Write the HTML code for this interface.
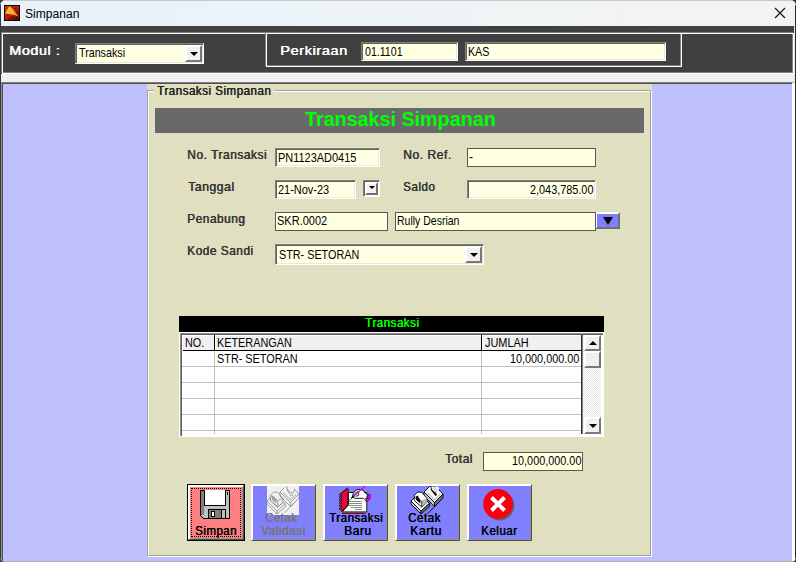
<!DOCTYPE html>
<html><head><meta charset="utf-8"><title>Simpanan</title>
<style>
html,body{margin:0;padding:0}
body{width:796px;height:562px;position:relative;overflow:hidden;background:#3c3c3c;font-family:"Liberation Sans",sans-serif}
.a{position:absolute;box-sizing:border-box}
.t{position:absolute;white-space:pre;transform-origin:0 0;font-family:"Liberation Sans",sans-serif}
.b{font-weight:bold}
.win{left:0;top:0;width:796px;height:562px;border-radius:6px 6px 5px 5px;overflow:hidden;background:#c0c0ff}
.fld{background:#ffffe1}
.sunk{border:1px solid;border-color:#808080 #fff #fff #808080;box-shadow:inset 1px 1px 0 #606060,inset -1px -1px 0 #e8e8e0}
.flat{border:1px solid #585858}
.btn{background:#8080ff;border:1px solid;border-color:#fff #505050 #505050 #fff;box-shadow:inset 1px 1px 0 #fff,inset -1px -1px 0 #909090}
.sb{background:#f0f0f0;border:2px solid;border-color:#fff #787878 #787878 #fff}
.tri{width:0;height:0;border-left:4px solid transparent;border-right:4px solid transparent;border-top:4px solid #000}
.triu{width:0;height:0;border-left:4px solid transparent;border-right:4px solid transparent;border-bottom:4px solid #000}
.gl{background:#c0c0c0;height:1px}
</style></head><body>
<div class="a win">
<!-- title bar -->
<div class="a" style="left:0;top:0;width:796px;height:26px;background:linear-gradient(90deg,#e8f0f9 0%,#ecf3f8 35%,#eff5f6 60%,#f3f3f3 85%,#f3f3f3 100%)"></div>
<div class="a" style="left:0;top:0;width:796px;height:1px;background:#c8c8c8"></div>
<svg class="a" style="left:4px;top:5px" width="16" height="16" viewBox="0 0 16 16">
<defs><linearGradient id="ig" x1="0" y1="0" x2="1" y2="1"><stop offset="0" stop-color="#e02a18"/><stop offset="0.55" stop-color="#b81810"/><stop offset="1" stop-color="#3a0804"/></linearGradient>
<linearGradient id="yg" x1="0" y1="0" x2="1" y2="1"><stop offset="0" stop-color="#ffd820"/><stop offset="1" stop-color="#e89010"/></linearGradient></defs>
<rect x="0" y="0" width="16" height="16" fill="#100400"/>
<rect x="1" y="1" width="14" height="14" fill="url(#ig)"/>
<polygon points="5.5,1 0.8,8.5 7,7.8 15,12.2 9,4.5" fill="url(#yg)"/>
<polygon points="1,8.5 7,7.5 12,10.3 7,9.2" fill="#fff4a0" opacity=".7"/>
<polygon points="1,9.2 7,9.4 12,11.5 4,10.5" fill="#c02010" opacity=".8"/>
<g fill="#200400" opacity=".75"><rect x="8" y="11" width="1" height="1"/><rect x="10" y="12" width="1" height="1"/><rect x="12" y="13" width="1" height="1"/><rect x="9" y="13" width="1" height="1"/><rect x="11" y="14" width="1" height="1"/><rect x="13" y="11" width="1" height="1"/><rect x="6" y="13" width="1" height="1"/><rect x="4" y="14" width="1" height="1"/><rect x="11" y="3" width="1" height="1"/><rect x="13" y="5" width="1" height="1"/><rect x="12" y="7" width="1" height="1"/><rect x="7" y="12" width="1" height="1"/></g>
</svg>
<svg class="a" style="left:774px;top:7px" width="12" height="12" viewBox="0 0 12 12"><path d="M1 1 L11 11 M11 1 L1 11" stroke="#111" stroke-width="1.1" fill="none"/></svg>
<!-- dark band -->
<div class="a" style="left:0;top:26px;width:796px;height:48px;background:#404040"></div>
<div class="a" style="left:1px;top:32px;width:792px;height:41px;border:1px solid #808080"></div>
<div class="a" style="left:2px;top:33px;width:792px;height:41px;border:1px solid #fff"></div>
<div class="a" style="left:265px;top:32px;width:416px;height:34px;border:1px solid #808080"></div>
<div class="a" style="left:266px;top:33px;width:416px;height:34px;border:1px solid #fff"></div>
<!-- combo modul -->
<div class="a fld sunk" style="left:75px;top:43px;width:129px;height:21px"></div>
<div class="a sb" style="left:185px;top:45px;width:17px;height:17px"><div class="a tri" style="left:2.5px;top:5px"></div></div>
<div class="a fld sunk" style="left:361px;top:42px;width:97px;height:19px"></div>
<div class="a fld sunk" style="left:465px;top:42px;width:201px;height:19px"></div>
<!-- light band -->
<div class="a" style="left:0;top:74px;width:796px;height:9px;background:#f0f0f0"></div>
<!-- client area -->
<div class="a" style="left:1px;top:82px;width:794px;height:480px;background:#c0c0ff;border:1px solid;border-color:#808080 #fff #b0b0a4 #909090;border-right-width:3px;box-shadow:inset 1px 1px 0 #505050"></div>
<!-- group box -->
<div class="a" style="left:147px;top:84px;width:505px;height:473px;background:#e0e0c0"></div>
<div class="a" style="left:147px;top:90px;width:504px;height:466px;border:1px solid #a0a0a0;box-shadow:1px 1px 0 #fff,inset 1px 1px 0 #fff"></div>
<div class="a" style="left:154px;top:86px;width:120px;height:10px;background:#e0e0c0"></div>
<div class="a" style="left:155px;top:108px;width:489px;height:25px;background:#696969"></div>
<!-- fields -->
<div class="a fld sunk" style="left:275px;top:148px;width:105px;height:19px"></div>
<div class="a fld sunk" style="left:275px;top:180px;width:81px;height:19px"></div>
<div class="a" style="left:363px;top:180px;width:17px;height:17px;background:#f0f0f0;border:1px solid;border-color:#808080 #fff #fff #808080;box-shadow:inset 1px 1px 0 #606060,inset -1px -1px 0 #fff"></div>
<div class="a" style="left:365px;top:182px;width:13px;height:13px;background:#f0f0f0;border:2px solid;border-color:#fff #707070 #707070 #fff"><div class="a" style="left:1.5px;top:2px;width:0;height:0;border-left:3px solid transparent;border-right:3px solid transparent;border-top:3px solid #000"></div></div>
<div class="a fld flat" style="left:467px;top:148px;width:129px;height:19px"></div>
<div class="a fld sunk" style="left:467px;top:180px;width:129px;height:19px"></div>
<div class="a fld flat" style="left:275px;top:212px;width:113px;height:19px"></div>
<div class="a fld flat" style="left:395px;top:212px;width:201px;height:19px"></div>
<div class="a" style="left:596px;top:212px;width:24px;height:17px;background:#8080ff;border-style:solid;border-width:2px 2px 2px 1px;border-color:#fff #707070 #707070 #fff"><div class="a" style="left:5.5px;top:3px;width:0;height:0;border-left:5px solid transparent;border-right:5px solid transparent;border-top:8px solid #000"></div></div>
<div class="a fld sunk" style="left:275px;top:244px;width:209px;height:21px"></div>
<div class="a sb" style="left:465px;top:246px;width:17px;height:17px"><div class="a tri" style="left:2.5px;top:5px"></div></div>
<!-- grid -->
<div class="a" style="left:179px;top:316px;width:425px;height:16px;background:#000"></div>
<div class="a" style="left:179px;top:332px;width:425px;height:105px;background:#fff;border:1px solid #fff;box-shadow:inset 1px 1px 0 #8c8c8c,inset 2px 2px 0 #606060"></div>
<div class="a" style="left:182px;top:335px;width:399px;height:15px;background:#f0f0f0;box-shadow:inset 1px 1px 0 #fff"></div><div class="a" style="left:215px;top:336px;width:1px;height:14px;background:#fff"></div><div class="a" style="left:482px;top:336px;width:1px;height:14px;background:#fff"></div>
<div class="a" style="left:183px;top:350px;width:398px;height:1px;background:#000"></div>
<div class="a" style="left:214px;top:335px;width:1px;height:16px;background:#000"></div>
<div class="a" style="left:481px;top:335px;width:1px;height:16px;background:#000"></div>
<div class="a" style="left:214px;top:351px;width:1px;height:83px;background:#c0c0c0"></div>
<div class="a" style="left:481px;top:351px;width:1px;height:83px;background:#c0c0c0"></div>
<div class="a" style="left:581px;top:335px;width:1px;height:99px;background:#303030"></div><div class="a" style="left:582px;top:335px;width:1px;height:99px;background:#808080"></div>
<div class="a gl" style="left:182px;top:366px;width:399px"></div>
<div class="a gl" style="left:182px;top:382px;width:399px"></div>
<div class="a gl" style="left:182px;top:398px;width:399px"></div>
<div class="a gl" style="left:182px;top:414px;width:399px"></div>
<div class="a gl" style="left:182px;top:430px;width:399px"></div>
<!-- scrollbar -->
<div class="a" style="left:583px;top:335px;width:18px;height:99px;background:#f7f7f7;background-image:repeating-conic-gradient(#ffffff 0 25%,#e6e6e6 0 50%);background-size:2px 2px"></div>
<div class="a sb" style="left:584px;top:335px;width:17px;height:16px"><div class="a triu" style="left:2.5px;top:4px"></div></div>
<div class="a sb" style="left:584px;top:351px;width:17px;height:17px"></div>
<div class="a sb" style="left:584px;top:417px;width:17px;height:17px"><div class="a tri" style="left:2.5px;top:5px"></div></div>
<!-- total -->
<div class="a fld flat" style="left:483px;top:452px;width:100px;height:19px"></div>
<!-- buttons -->
<div class="a" style="left:187px;top:484px;width:58px;height:57px;background:#000"></div>
<div class="a btn" style="left:188px;top:485px;width:56px;height:55px;background:#ff8080"></div>
<div class="a" style="left:191px;top:488px;width:50px;height:49px;border:1px dotted #000"></div>
<div class="a btn" style="left:251px;top:484px;width:65px;height:57px"></div>
<div class="a btn" style="left:323px;top:484px;width:65px;height:57px"></div>
<div class="a btn" style="left:395px;top:484px;width:65px;height:57px"></div>
<div class="a btn" style="left:467px;top:484px;width:65px;height:57px"></div>
<!--ICONS_START--><svg class="a" style="left:180px;top:480px" width="360" height="65" viewBox="180 480 360 65">
<!-- floppy -->
<g shape-rendering="crispEdges">
<polygon points="200,490 230,490 230,519 203,519 200,516" fill="#000"/>
<polygon points="201,491 229,491 229,518 203.5,518 201,515.5" fill="#c0c0c0"/>
<rect x="201" y="491" width="3" height="24" fill="#808080"/>
<rect x="204" y="490" width="22" height="16" fill="#000"/>
<rect x="205" y="490" width="20" height="15" fill="#fff"/>
<rect x="227" y="492" width="1" height="3" fill="#000"/>
<rect x="208" y="509" width="18" height="10" fill="#000"/>
<rect x="209" y="510" width="12" height="8" fill="#808080"/>
<rect x="221" y="510" width="1" height="8" fill="#000"/>
<rect x="222" y="510" width="3" height="8" fill="#c0c0c0"/>
<rect x="211" y="511" width="4" height="6" fill="#000"/>
<rect x="212" y="512" width="2" height="4" fill="#fff"/>
</g>
<!-- disabled print icon -->
<rect x="267" y="486" width="32" height="29" fill="#f0f0f0"/>
<g transform="translate(267,486)" fill="none" stroke="#8c8c8c" stroke-width="0.8">
<line x1="28" y1="16.2" x2="17.5" y2="26.8"/>
<polyline points="17.5,1.5 13,6 23.5,16.5 32,8 27.5,3.5"/>
<polyline points="13,6 13,10 23.5,20.5 23.5,16.5"/><polyline points="23.5,20.5 32,12 32,8"/>
<polyline points="16,6.5 23.5,14 29.5,8"/>
<polyline points="19.8,0.3 20.9,4.3 25.5,7.7 28,2.5"/>
<polyline points="19.5,3.5 24.5,10 26,9"/>
<polygon points="0,15 3.3,11.7 3.3,14.5 10.7,21 15.8,16.5 18.4,17.4 10,25"/>
<polyline points="0,15 0,18 10,28 10,25"/><polyline points="10,28 18.4,20.6 18.4,17.4"/>
<polygon points="3.3,9.4 6.7,6 10.7,6.3 15.8,12.2 15.8,16.5 10.7,21 3.3,14.5"/>
<polyline points="3.3,9.4 10.7,14.5 15.8,12.2"/><line x1="10.7" y1="14.5" x2="10.7" y2="21"/>
<polygon points="4.4,10.8 6.5,9.5 9.5,14.5 9.3,17.5 5,13.8" fill="#a0a0a0" stroke="none"/>
</g>
<!-- notebook -->
<g>
<defs><pattern id="dz" width="2" height="2" patternUnits="userSpaceOnUse"><rect width="2" height="2" fill="#ff0000"/><rect width="1" height="1" fill="#d000c0"/><rect x="1" y="1" width="1" height="1" fill="#d000c0"/></pattern></defs>
<polygon points="348.3,492.5 366.8,492.5 366.8,511.9 342.3,511.9 348.3,505" fill="#fff" stroke="#000" stroke-width="0.9"/>
<g stroke="#8a8a8a" stroke-width="1"><line x1="349" y1="501.5" x2="361.5" y2="501.5"/><line x1="349" y1="503.5" x2="362" y2="503.5"/><line x1="349" y1="505.5" x2="362" y2="505.5"/><line x1="351" y1="507.5" x2="362" y2="507.5"/><line x1="355" y1="509.5" x2="362" y2="509.5"/></g>
<line x1="342" y1="513.4" x2="365.5" y2="513.4" stroke="#900000" stroke-width="1.1"/>
<polygon points="340.8,493.6 347.3,488.3 347.7,505.3 341.1,511.6" fill="#ff0000"/>
<polygon points="342.5,494.5 346,491.5 346,504.5 342.5,508" fill="url(#dz)"/>
<line x1="348" y1="488.4" x2="348" y2="505.2" stroke="#000" stroke-width="1"/>
<line x1="340.8" y1="493.4" x2="347.6" y2="487.9" stroke="#000" stroke-width="0.9"/>
<line x1="341.3" y1="511.8" x2="348" y2="505.2" stroke="#000" stroke-width="0.9"/>
<g fill="#a0a0a0" stroke="#000" stroke-width="0.9"><circle cx="340.4" cy="494.6" r="1"/><circle cx="340.4" cy="497.4" r="1"/><circle cx="340.4" cy="500.2" r="1"/><circle cx="340.4" cy="503.1" r="1"/><circle cx="340.4" cy="505.9" r="1"/><circle cx="340.4" cy="508.8" r="1"/></g>
<path d="M353.1,493.6 L355.7,490 L358.8,489.4 L363.4,490.3 L364.5,492.5 L366.5,493.4 L367.3,495.4 L366.8,498.2 L364.5,499.4 L363.4,498.3 L355,498.3 L352.5,497.1 Z" fill="#fff" stroke="#000" stroke-width="0.9"/>
<polyline points="353.3,495.5 357.5,491 358.6,492.2 358.3,495.6 355.5,496.3" fill="none" stroke="#000" stroke-width="0.8"/>
<polygon points="368.2,494 370.2,494.5 370.2,498.8 367.9,501.1 365,501.1 367.9,498.2" fill="#ff00c8" stroke="#000" stroke-width="0.5"/>
<line x1="364.7" y1="486.2" x2="354.2" y2="495.8" stroke="#e800d8" stroke-width="1.3"/>
<line x1="354.2" y1="495.8" x2="351.1" y2="498.6" stroke="#000" stroke-width="1.3"/>
<line x1="350.5" y1="499.3" x2="349.4" y2="500.5" stroke="#000" stroke-width="1"/>
</g>
<!-- computer + printer -->
<g transform="translate(411,486)" stroke="#000" stroke-width="0.9" stroke-linejoin="miter">
<line x1="28" y1="16.2" x2="16.5" y2="27.8"/>
<polygon points="13,6 18.5,0.5 24.5,0.5 32,8 23.5,16.5" fill="#f4f4f4"/>
<polygon points="13,6 23.5,16.5 23.5,20.5 13,10" fill="#c8c8c8"/>
<polygon points="23.5,16.5 32,8 32,12 23.5,20.5" fill="#707070"/>
<polyline points="16,6.5 23.5,14 29.5,8" fill="none" stroke="#909090" stroke-width="0.8"/>
<polygon points="19.5,3.5 21.5,1.5 26,9 24.5,10" fill="#000" stroke="none"/>
<polygon points="19.8,0.5 26.6,0.5 28.3,2.3 25.5,7.7 20.9,4.3" fill="#f8f8f8" stroke="none"/>
<polyline points="25.5,7.7 20.9,4.3 19.8,0.5" fill="none" stroke="#000" stroke-width="0.8"/>
<g stroke="#b0b0b0" stroke-width="0.7"><line x1="22" y1="2" x2="26" y2="2"/><line x1="22.5" y1="3.7" x2="26.5" y2="3.7"/><line x1="23.5" y1="5.4" x2="26" y2="5.4"/></g>
<polygon points="0,15 8,7 18.4,17.4 10,25" fill="#fafafa"/>
<polygon points="0,15 10,25 10,28 0,18" fill="#c0c0c0"/>
<polygon points="10,25 18.4,17.4 18.4,20.6 10,28" fill="#707070"/>
<polygon points="3.3,9.4 6.7,6 10.7,6.3 15.8,12.2 15.8,16.5 10.7,21 3.3,14.5" fill="#fff"/>
<polygon points="4.4,10.8 6.5,9.5 9.5,14.5 9.3,17.5 5,13.8" fill="#000" stroke="none"/>
<polygon points="10.7,14.5 15.8,12.2 15.8,16.5 10.7,21" fill="#b8b8b8" stroke="none"/>
<line x1="10.7" y1="14.5" x2="10.7" y2="21" stroke-width="0.7"/>
</g>
<!-- keluar -->
<circle cx="499.6" cy="505.6" r="14.8" fill="#606068"/>
<circle cx="498" cy="504" r="14.9" fill="#f80010"/>
<path d="M491.5,497.5 L504.5,510.5 M504.5,497.5 L491.5,510.5" stroke="#fff" stroke-width="3.9" fill="none"/>
</svg>
<!--ICONS_END-->
<span class="t" style="left:24.79px;top:8.0px;font-size:12px;line-height:12px;color:#000;transform:scaleX(1.0058)">Simpanan</span>
<span class="t" style="left:8.74px;top:44.0px;font-size:13.5px;line-height:13.5px;letter-spacing:0.6px;text-shadow:0.6px 0 0 currentColor;color:#fff;transform:scaleX(1.0565)">Modul :</span>
<span class="t" style="left:79.00px;top:45.5px;font-size:13px;line-height:13px;color:#000;transform:scaleX(0.8236)">Transaksi</span>
<span class="t" style="left:280.33px;top:44.0px;font-size:13.5px;line-height:13.5px;letter-spacing:0.6px;text-shadow:0.6px 0 0 currentColor;color:#fff;transform:scaleX(1.0694)">Perkiraan</span>
<span class="t" style="left:364.50px;top:45.0px;font-size:13px;line-height:13px;color:#000;transform:scaleX(0.8152)">01.1101</span>
<span class="t" style="left:467.78px;top:45.0px;font-size:13px;line-height:13px;color:#000;transform:scaleX(0.8208)">KAS</span>
<span class="t" style="left:157.20px;top:84.1px;font-size:13px;line-height:13px;letter-spacing:0.6px;text-shadow:0.6px 0 0 currentColor;color:#222;transform:scaleX(0.8859)">Transaksi Simpanan</span>
<span class="t" style="left:305.20px;top:109.3px;font-size:20px;line-height:20px;font-weight:bold;color:#00ff00;transform:scaleX(0.9859)">Transaksi Simpanan</span>
<span class="t" style="left:186.68px;top:148.0px;font-size:13px;line-height:13px;letter-spacing:0.6px;text-shadow:0.6px 0 0 currentColor;color:#333;transform:scaleX(0.9163)">No. Transaksi</span>
<span class="t" style="left:187.60px;top:180.0px;font-size:13px;line-height:13px;letter-spacing:0.6px;text-shadow:0.6px 0 0 currentColor;color:#333;transform:scaleX(0.9327)">Tanggal</span>
<span class="t" style="left:186.89px;top:212.0px;font-size:13px;line-height:13px;letter-spacing:0.6px;text-shadow:0.6px 0 0 currentColor;color:#333;transform:scaleX(0.9081)">Penabung</span>
<span class="t" style="left:186.89px;top:244.0px;font-size:13px;line-height:13px;letter-spacing:0.6px;text-shadow:0.6px 0 0 currentColor;color:#333;transform:scaleX(0.9070)">Kode Sandi</span>
<span class="t" style="left:403.07px;top:148.0px;font-size:13px;line-height:13px;letter-spacing:0.6px;text-shadow:0.6px 0 0 currentColor;color:#333;transform:scaleX(0.9260)">No. Ref.</span>
<span class="t" style="left:403.11px;top:180.0px;font-size:13px;line-height:13px;letter-spacing:0.6px;text-shadow:0.6px 0 0 currentColor;color:#333;transform:scaleX(0.8857)">Saldo</span>
<span class="t" style="left:277.86px;top:151.0px;font-size:13px;line-height:13px;color:#000;transform:scaleX(0.8424)">PN1123AD0415</span>
<span class="t" style="left:277.86px;top:183.0px;font-size:13px;line-height:13px;color:#000;transform:scaleX(0.8424)">21-Nov-23</span>
<span class="t" style="left:468.77px;top:150.0px;font-size:13px;line-height:13px;color:#000;transform:scaleX(0.9333)">-</span>
<span class="t" style="left:529.76px;top:183.0px;font-size:13px;line-height:13px;color:#000;transform:scaleX(0.8360)">2,043,785.00</span>
<span class="t" style="left:276.85px;top:214.0px;font-size:13px;line-height:13px;color:#000;transform:scaleX(0.8466)">SKR.0002</span>
<span class="t" style="left:396.99px;top:214.0px;font-size:13px;line-height:13px;color:#000;transform:scaleX(0.8079)">Rully Desrian</span>
<span class="t" style="left:278.87px;top:248.0px;font-size:13px;line-height:13px;color:#000;transform:scaleX(0.8305)">STR- SETORAN</span>
<span class="t" style="left:364.50px;top:316.0px;font-size:13px;line-height:13px;letter-spacing:0.6px;text-shadow:0.6px 0 0 currentColor;color:#00ff00;transform:scaleX(0.8852)">Transaksi</span>
<span class="t" style="left:184.87px;top:336.0px;font-size:13px;line-height:13px;color:#000;transform:scaleX(0.8333)">NO.</span>
<span class="t" style="left:217.37px;top:336.0px;font-size:13px;line-height:13px;color:#000;transform:scaleX(0.8341)">KETERANGAN</span>
<span class="t" style="left:484.50px;top:336.0px;font-size:13px;line-height:13px;color:#000;transform:scaleX(0.8392)">JUMLAH</span>
<span class="t" style="left:217.36px;top:352.0px;font-size:13px;line-height:13px;color:#000;transform:scaleX(0.8358)">STR- SETORAN</span>
<span class="t" style="left:510.47px;top:352.0px;font-size:13px;line-height:13px;color:#000;transform:scaleX(0.8329)">10,000,000.00</span>
<span class="t" style="left:444.70px;top:452.0px;font-size:13px;line-height:13px;letter-spacing:0.6px;text-shadow:0.6px 0 0 currentColor;color:#333;transform:scaleX(0.9100)">Total</span>
<span class="t" style="left:511.86px;top:454.0px;font-size:13px;line-height:13px;color:#000;transform:scaleX(0.8354)">10,000,000.00</span>
<span class="t" style="left:195.12px;top:523.5px;font-size:13px;line-height:13px;letter-spacing:0.6px;text-shadow:0.6px 0 0 currentColor;color:#000;transform:scaleX(0.8761)">Simpan</span>
<span class="t" style="left:264.53px;top:511.0px;font-size:13px;line-height:13px;letter-spacing:0.6px;text-shadow:0.6px 0 0 currentColor;color:#747474;transform:scaleX(0.8667)">Cetak</span>
<span class="t" style="left:261.40px;top:523.5px;font-size:13px;line-height:13px;letter-spacing:0.6px;text-shadow:0.6px 0 0 currentColor;color:#747474;transform:scaleX(0.9020)">Validasi</span>
<span class="t" style="left:328.50px;top:511.0px;font-size:13px;line-height:13px;letter-spacing:0.6px;text-shadow:0.6px 0 0 currentColor;color:#000;transform:scaleX(0.8836)">Transaksi</span>
<span class="t" style="left:343.68px;top:523.5px;font-size:13px;line-height:13px;letter-spacing:0.6px;text-shadow:0.6px 0 0 currentColor;color:#000;transform:scaleX(0.9179)">Baru</span>
<span class="t" style="left:408.02px;top:511.0px;font-size:13px;line-height:13px;letter-spacing:0.6px;text-shadow:0.6px 0 0 currentColor;color:#000;transform:scaleX(0.8833)">Cetak</span>
<span class="t" style="left:409.57px;top:523.5px;font-size:13px;line-height:13px;letter-spacing:0.6px;text-shadow:0.6px 0 0 currentColor;color:#000;transform:scaleX(0.9313)">Kartu</span>
<span class="t" style="left:481.02px;top:523.5px;font-size:13px;line-height:13px;letter-spacing:0.6px;text-shadow:0.6px 0 0 currentColor;color:#000;transform:scaleX(0.8825)">Keluar</span>
<!-- window edge -->
<div class="a" style="left:0;top:4px;width:1px;height:555px;background:#383838"></div>
<div class="a" style="left:795px;top:5px;width:1px;height:553px;background:#2a2a2a"></div>
<div class="a" style="left:794px;top:26px;width:1px;height:56px;background:#e8e8e8"></div>
</div>
</body></html>
